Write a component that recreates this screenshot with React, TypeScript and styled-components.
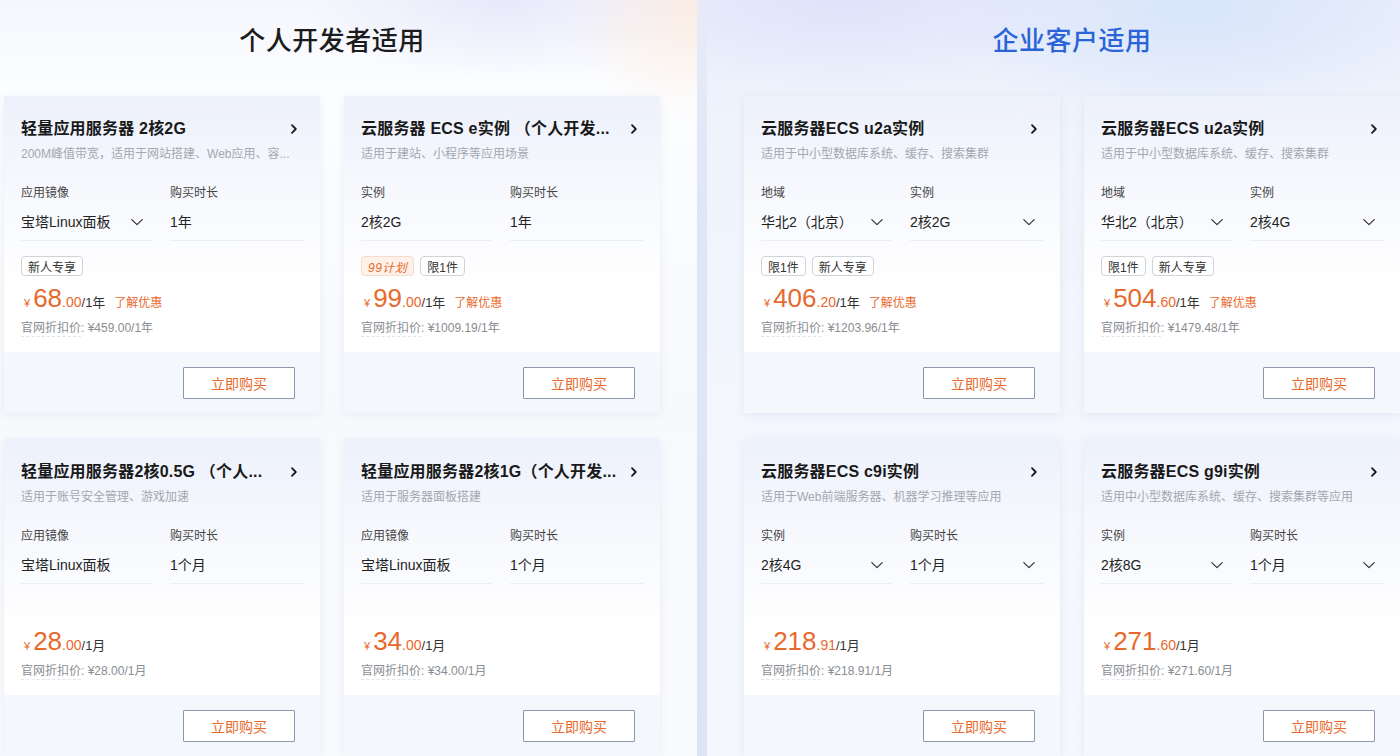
import React from "react";
import styled, { createGlobalStyle } from "styled-components";

const GlobalStyle = createGlobalStyle`
  html, body { margin: 0; padding: 0; }
  body {
    width: 1400px;
    height: 756px;
    overflow: hidden;
    font-family: "Liberation Sans", "Noto Sans CJK SC", sans-serif;
    color: #222;
    background: #f6f8fd;
  }
  * { box-sizing: border-box; }
`;

const ORANGE = "#e8692c";

type Field = { label: string; value: string; select?: boolean };
type Tag = { text: string; special?: boolean };
type Card = {
  title: string;
  desc: string;
  fields: [Field, Field];
  tags: Tag[];
  price: string;
  cents: string;
  unit: string;
  promo?: boolean;
  orig: string;
};

const personal: Card[] = [
  {
    title: "轻量应用服务器 2核2G",
    desc: "200M峰值带宽，适用于网站搭建、Web应用、容...",
    fields: [
      { label: "应用镜像", value: "宝塔Linux面板", select: true },
      { label: "购买时长", value: "1年" },
    ],
    tags: [{ text: "新人专享" }],
    price: "68",
    cents: ".00",
    unit: "/1年",
    promo: true,
    orig: "¥459.00/1年",
  },
  {
    title: "云服务器 ECS e实例 （个人开发...",
    desc: "适用于建站、小程序等应用场景",
    fields: [
      { label: "实例", value: "2核2G" },
      { label: "购买时长", value: "1年" },
    ],
    tags: [{ text: "99计划", special: true }, { text: "限1件" }],
    price: "99",
    cents: ".00",
    unit: "/1年",
    promo: true,
    orig: "¥1009.19/1年",
  },
  {
    title: "轻量应用服务器2核0.5G （个人...",
    desc: "适用于账号安全管理、游戏加速",
    fields: [
      { label: "应用镜像", value: "宝塔Linux面板" },
      { label: "购买时长", value: "1个月" },
    ],
    tags: [],
    price: "28",
    cents: ".00",
    unit: "/1月",
    orig: "¥28.00/1月",
  },
  {
    title: "轻量应用服务器2核1G（个人开发...",
    desc: "适用于服务器面板搭建",
    fields: [
      { label: "应用镜像", value: "宝塔Linux面板" },
      { label: "购买时长", value: "1个月" },
    ],
    tags: [],
    price: "34",
    cents: ".00",
    unit: "/1月",
    orig: "¥34.00/1月",
  },
];

const enterprise: Card[] = [
  {
    title: "云服务器ECS u2a实例",
    desc: "适用于中小型数据库系统、缓存、搜索集群",
    fields: [
      { label: "地域", value: "华北2（北京）", select: true },
      { label: "实例", value: "2核2G", select: true },
    ],
    tags: [{ text: "限1件" }, { text: "新人专享" }],
    price: "406",
    cents: ".20",
    unit: "/1年",
    promo: true,
    orig: "¥1203.96/1年",
  },
  {
    title: "云服务器ECS u2a实例",
    desc: "适用于中小型数据库系统、缓存、搜索集群",
    fields: [
      { label: "地域", value: "华北2（北京）", select: true },
      { label: "实例", value: "2核4G", select: true },
    ],
    tags: [{ text: "限1件" }, { text: "新人专享" }],
    price: "504",
    cents: ".60",
    unit: "/1年",
    promo: true,
    orig: "¥1479.48/1年",
  },
  {
    title: "云服务器ECS c9i实例",
    desc: "适用于Web前端服务器、机器学习推理等应用",
    fields: [
      { label: "实例", value: "2核4G", select: true },
      { label: "购买时长", value: "1个月", select: true },
    ],
    tags: [],
    price: "218",
    cents: ".91",
    unit: "/1月",
    orig: "¥218.91/1月",
  },
  {
    title: "云服务器ECS g9i实例",
    desc: "适用中小型数据库系统、缓存、搜索集群等应用",
    fields: [
      { label: "实例", value: "2核8G", select: true },
      { label: "购买时长", value: "1个月", select: true },
    ],
    tags: [],
    price: "271",
    cents: ".60",
    unit: "/1月",
    orig: "¥271.60/1月",
  },
];

const Page = styled.div`
  display: flex;
  width: 1400px;
  height: 756px;
  overflow: hidden;
`;

const Section = styled.section<{ $side: "left" | "right" }>`
  flex: none;
  width: ${(p) => (p.$side === "left" ? "697px" : "693px")};
  padding-left: ${(p) => (p.$side === "left" ? "4px" : "37px")};
  display: flex;
  flex-direction: column;
  align-items: flex-start;
  background: ${(p) =>
    p.$side === "left"
      ? `radial-gradient(ellipse 130px 110px at 100% 10px, rgba(255, 228, 206, 0.55), rgba(255,255,255,0) 100%),
         radial-gradient(ellipse 200px 80px at 72% 0px, rgba(226, 228, 250, 0.7), rgba(255,255,255,0) 100%),
         linear-gradient(180deg, #f5f7fd 0px, #fcfdff 90px, #f8f9fd 400px, #f9fafd 100%)`
      : `radial-gradient(ellipse 260px 90px at 20% 0px, rgba(222, 226, 250, 0.9), rgba(255,255,255,0) 100%),
         radial-gradient(ellipse 260px 110px at 70% 10px, rgba(214, 228, 250, 0.9), rgba(255,255,255,0) 100%),
         linear-gradient(180deg, #e9eefb 0px, #eff3fc 120px, #f3f6fd 400px, #f4f7fd 100%)`};
`;

const Divider = styled.div`
  flex: none;
  width: 10px;
  background: linear-gradient(180deg, #e7ebf8, #dfe6f6 200px, #dce4f5);
`;

const SectionTitle = styled.h2<{ $accent?: boolean }>`
  margin: 0;
  width: 656px;
  height: 96px;
  display: flex;
  align-items: center;
  justify-content: center;
  padding-bottom: 20px;
  font-size: 26px;
  font-weight: 500;
  letter-spacing: 0.5px;
  color: ${(p) => (p.$accent ? "#2a64d8" : "#1c1c1c")};
  font-family: "Noto Sans CJK SC", sans-serif;
`;

const Grid = styled.div`
  display: grid;
  grid-template-columns: 316px 316px;
  column-gap: 24px;
  row-gap: 26px;
`;

const CardBox = styled.div`
  width: 316px;
  height: 317px;
  display: flex;
  flex-direction: column;
  background: linear-gradient(180deg, #edf1fb 0px, #f6f8fd 90px, #ffffff 190px, #ffffff 100%);
  border-radius: 2px;
  box-shadow: 0 2px 8px rgba(40, 60, 110, 0.07);
  overflow: hidden;
`;

const CardBody = styled.div`
  flex: 1;
  padding: 22px 16px 0 17px;
  display: flex;
  flex-direction: column;
`;

const TitleRow = styled.div`
  display: flex;
  align-items: center;
  justify-content: space-between;
  height: 22px;
  padding-right: 4px;
`;

const CardTitle = styled.div`
  font-size: 16px;
  font-weight: 600;
  color: #191919;
  white-space: nowrap;
  overflow: hidden;
  text-overflow: ellipsis;
  line-height: 22px;
  letter-spacing: 0.2px;
`;

const Desc = styled.div`
  margin-top: 5px;
  font-size: 12px;
  line-height: 18px;
  color: #a3a7af;
  white-space: nowrap;
  overflow: hidden;
  text-overflow: ellipsis;
`;

const Fields = styled.div`
  margin-top: 21px;
  display: grid;
  grid-template-columns: 131px 134px;
  column-gap: 18px;
`;

const FieldLabel = styled.div`
  font-size: 12px;
  line-height: 18px;
  color: #444;
`;

const FieldValue = styled.div`
  margin-top: 5px;
  height: 34px;
  padding: 4px 8px 7px 0;
  display: flex;
  align-items: center;
  justify-content: space-between;
  font-size: 14px;
  line-height: 22px;
  color: #222;
  border-bottom: 1px solid #eceef3;
`;

const Tags = styled.div`
  margin-top: 15px;
  height: 20px;
  display: flex;
  gap: 6px;
`;

const TagChip = styled.span<{ $special?: boolean }>`
  height: 20px;
  padding: 0 6px;
  display: inline-flex;
  align-items: center;
  font-size: 12px;
  border-radius: 4px;
  border: 1px solid ${(p) => (p.$special ? "#f6dccb" : "#cfd3da")};
  background: ${(p) => (p.$special ? "#fdf1e9" : "#fff")};
  color: ${(p) => (p.$special ? ORANGE : "#333")};
  font-style: ${(p) => (p.$special ? "italic" : "normal")};
  letter-spacing: ${(p) => (p.$special ? "0.5px" : "0")};
`;

const PriceRow = styled.div`
  margin-top: 8px;
  height: 28px;
  display: flex;
  align-items: baseline;
  color: ${ORANGE};
  padding-left: 3px;
`;

const Yen = styled.span`
  font-size: 11px;
  margin-right: 3px;
`;

const Big = styled.span`
  font-size: 26px;
  line-height: 28px;
`;

const Cents = styled.span`
  font-size: 14px;
`;

const Unit = styled.span`
  font-size: 13px;
  color: #333;
`;

const Promo = styled.span`
  font-size: 12px;
  margin-left: 9px;
  color: ${ORANGE};
`;

const Orig = styled.div`
  margin-top: 7px;
  font-size: 12px;
  line-height: 18px;
  color: #8a8d93;
`;

const Dotted = styled.span`
  border-bottom: 1px dashed #e2e4e8;
  padding-bottom: 1px;
`;

const Footer = styled.div`
  height: 61px;
  flex: none;
  background: #f4f7fc;
  display: flex;
  justify-content: flex-end;
  align-items: flex-start;
  padding: 15px 25px 0 0;
`;

const BuyButton = styled.button`
  width: 112px;
  height: 32px;
  background: #fff;
  border: 1px solid #8f96ad;
  border-radius: 1px;
  color: ${ORANGE};
  font-size: 14px;
  font-family: "Noto Sans CJK SC", sans-serif;
  cursor: pointer;
`;

const ChevronRight = () => (
  <svg width="12" height="12" viewBox="0 0 12 12" fill="none">
    <path d="M4 2.2L7.8 6L4 9.8" stroke="#1a1a1a" strokeWidth="1.8" strokeLinecap="round" strokeLinejoin="round" />
  </svg>
);

const ChevronDown = () => (
  <svg width="14" height="14" viewBox="0 0 14 14" fill="none">
    <path d="M1.8 4.6L7 9.6L12.2 4.6" stroke="#333" strokeWidth="1.2" strokeLinecap="round" strokeLinejoin="round" />
  </svg>
);

const ProductCard = ({ c }: { c: Card }) => (
  <CardBox>
    <CardBody>
      <TitleRow>
        <CardTitle>{c.title}</CardTitle>
        <ChevronRight />
      </TitleRow>
      <Desc>{c.desc}</Desc>
      <Fields>
        {c.fields.map((f) => (
          <div key={f.label}>
            <FieldLabel>{f.label}</FieldLabel>
            <FieldValue>
              <span>{f.value}</span>
              {f.select && <ChevronDown />}
            </FieldValue>
          </div>
        ))}
      </Fields>
      <Tags>
        {c.tags.map((t) => (
          <TagChip key={t.text} $special={t.special}>
            {t.text}
          </TagChip>
        ))}
      </Tags>
      <PriceRow>
        <Yen>¥</Yen>
        <Big>{c.price}</Big>
        <Cents>{c.cents}</Cents>
        <Unit>{c.unit}</Unit>
        {c.promo && <Promo>了解优惠</Promo>}
      </PriceRow>
      <Orig>
        <Dotted>官网折扣价</Dotted>: {c.orig}
      </Orig>
    </CardBody>
    <Footer>
      <BuyButton>立即购买</BuyButton>
    </Footer>
  </CardBox>
);

export default function App() {
  return (
    <>
      <GlobalStyle />
      <Page>
        <Section $side="left">
          <SectionTitle>个人开发者适用</SectionTitle>
          <Grid>
            {personal.map((c, i) => (
              <ProductCard key={i} c={c} />
            ))}
          </Grid>
        </Section>
        <Divider />
        <Section $side="right">
          <SectionTitle $accent>企业客户适用</SectionTitle>
          <Grid>
            {enterprise.map((c, i) => (
              <ProductCard key={i} c={c} />
            ))}
          </Grid>
        </Section>
      </Page>
    </>
  );
}
